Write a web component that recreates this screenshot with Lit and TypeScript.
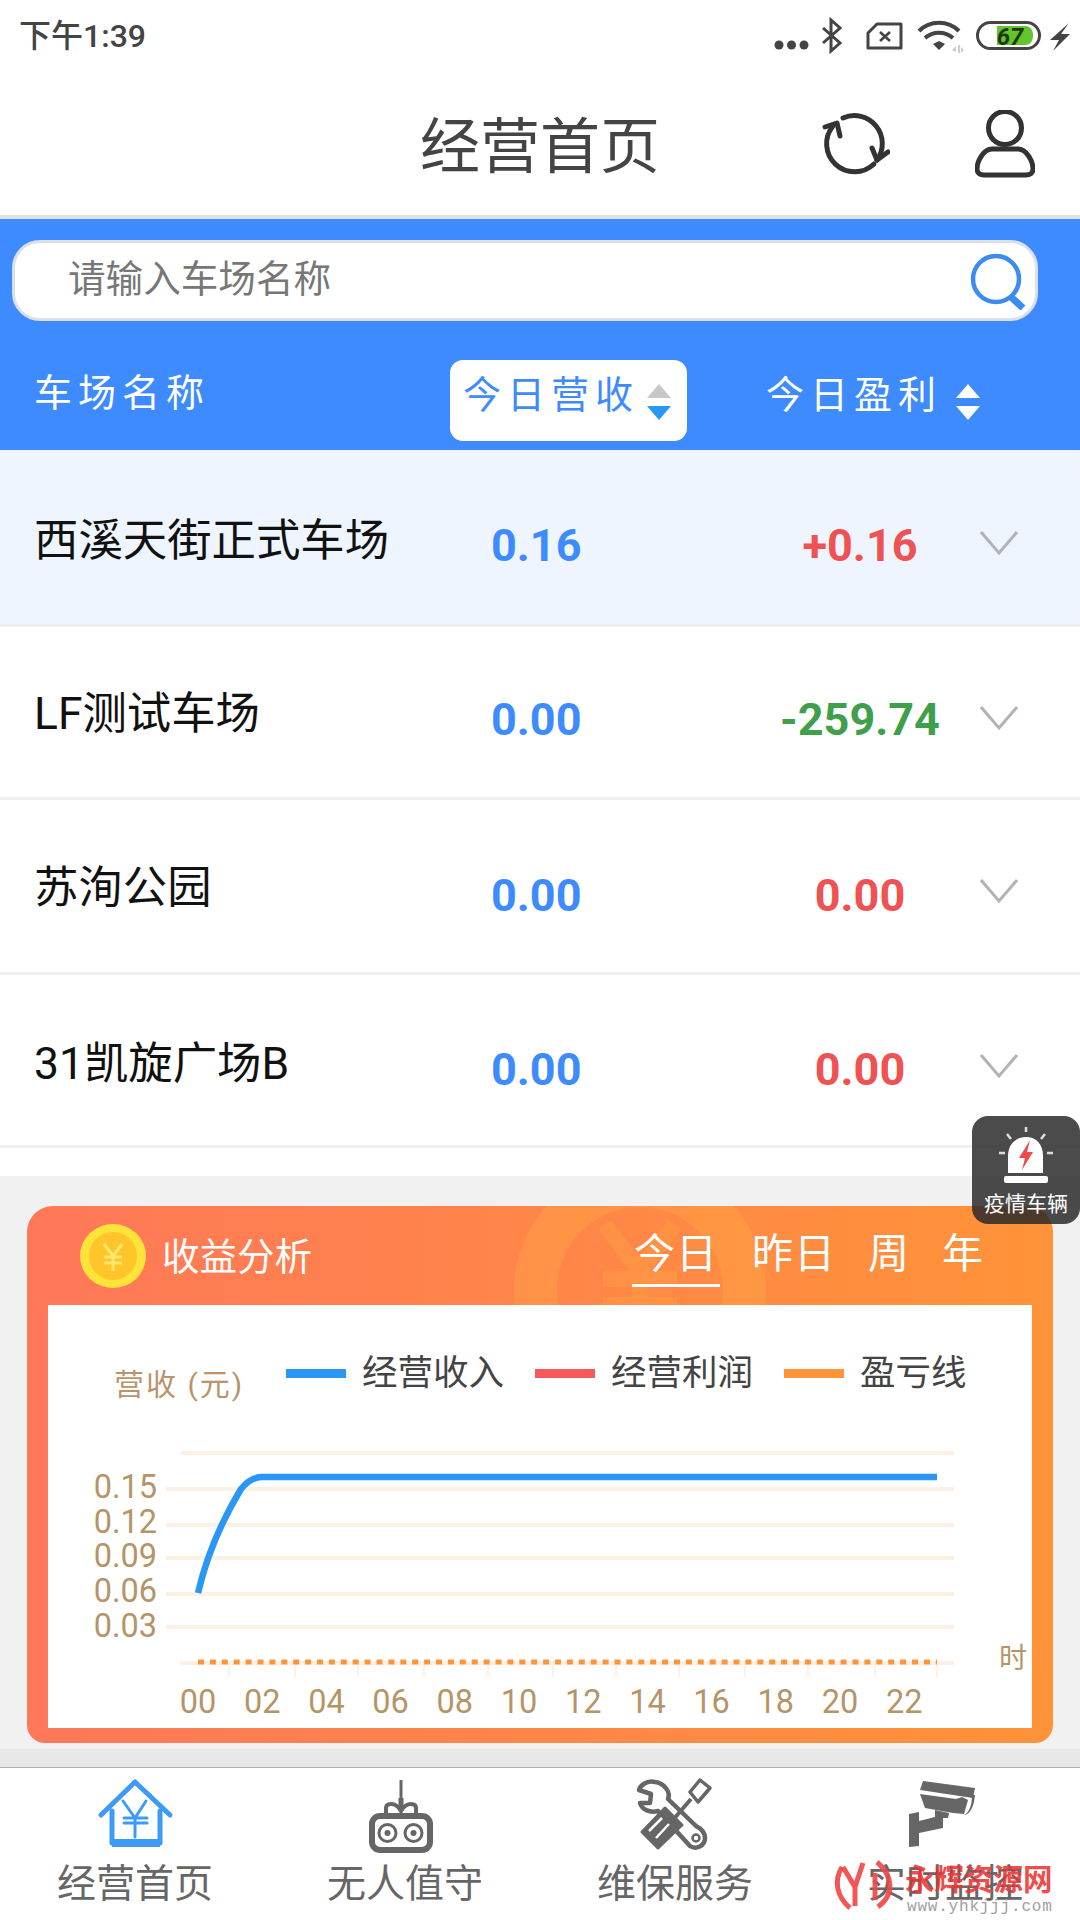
import { LitElement, html, css, svg } from "lit";
import { customElement } from "lit/decorators.js";

const rows = [
  { name: "西溪天街正式车场", rev: "0.16", profit: "+0.16", cls: "red", pos: "on" },
  { name: "LF测试车场", rev: "0.00", profit: "-259.74", cls: "green", pos: "r2" },
  { name: "苏洵公园", rev: "0.00", profit: "0.00", cls: "red", pos: "r3" },
  { name: "31凯旋广场B", rev: "0.00", profit: "0.00", cls: "red", pos: "r4" },
];

const sortArrows = (up: string, down: string) => html`<svg class="sort" width="24" height="36" viewBox="0 0 24 36">
  <path d="M12 0 24 14H0Z" fill=${up}/><path d="M0 22H24L12 36Z" fill=${down}/></svg>`;

const xLabels = ["00","02","04","06","08","10","12","14","16","18","20","22"];
const yLabels: [string, number][] = [["0.15",181],["0.12",216],["0.09",250],["0.06",285],["0.03",320]];
const ticks = [229,295,358,424,488,553,616,679,745,808,875,937];
const gridY = [184,220,253,289,322];

const chart = svg`
  <rect x="133" y="146" width="773" height="4" fill="#fdf0e4"/>
  ${gridY.map(y => svg`<rect x="118" y=${y - 2} width="788" height="4" fill="#fdf0e4"/>`)}
  <rect x="132" y="356" width="774" height="4" fill="#fdf0e4"/>
  ${ticks.map(x => svg`<rect x=${x - 48 - 1} y="358" width="2" height="14" fill="#fdf0e4"/>`)}
  <path d="M150 288C157 258 170 222 193 184Q203 172 214 172H889" fill="none" stroke="#2a97f5" stroke-width="6.5"/>
  <line x1="150" y1="357" x2="889" y2="357" stroke="#ff9538" stroke-width="5" stroke-dasharray="6 5.9"/>
  ${yLabels.map(([t, y]) => svg`<text class="ax" x="109" y=${y + 12} text-anchor="end">${t}</text>`)}
  ${xLabels.map((t, i) => svg`<text class="ax" x=${150 + i * 64.2} y="408" text-anchor="middle">${t}</text>`)}
  <text class="hr" x="965" y="363" text-anchor="middle">时</text>
`;

@customElement("app-root")
export class AppRoot extends LitElement {
  static styles = css`
    :host { display: block; position: relative; width: 1080px; height: 1920px; overflow: hidden; background: #f1f1f1;
      font-family: Roboto, "Noto Sans CJK SC", sans-serif; }
    .status { height: 72px; background: #fff; display: flex; justify-content: space-between; align-items: flex-start; }
    .time { font-size: 32px; font-weight: 500; color: #444; margin: 17px 0 0 19px; line-height: 38px; }
    .status svg { display: block; }
    .head { height: 143px; background: #fff; border-bottom: 4px solid #dfe1e3; display: grid;
      grid-template-columns: 822px 68px 85px 60px 45px; position: relative; }
    .title { position: absolute; left: 0; right: 0; top: 34px; text-align: center; font-size: 60px; line-height: 84px; color: #444; }
    .head svg { display: block; margin-top: 38px; }
    .refresh { grid-column: 2; }
    .user { grid-column: 4; }
    .blue { height: 231px; background: #3d8bff; padding: 21px 0 0 12px; box-sizing: border-box; }
    .search { width: 1026px; height: 81px; box-sizing: border-box; border: 3px solid #dcdfe4; border-radius: 28px; background: #fff;
      display: flex; align-items: center; justify-content: space-between; padding: 0 7px 0 53px; }
    .search span { font-size: 37.6px; color: #777; margin-top: -10px; }
    .cols { display: grid; grid-template-columns: 416px 237px 1fr; margin-top: 39px; margin-left: 22px; }
    .cols .c { font-size: 38px; letter-spacing: 6px; color: #fff; line-height: 50px; white-space: nowrap; }
    .c1 { margin-top: 8px; }
    .btn { height: 81px; box-sizing: border-box; background: #fff; border-radius: 13px; display: flex; padding: 10px 0 0 13px; gap: 8px; }
    .cols .btn .c { color: #3d8bff; }
    .c3 { display: flex; padding: 10px 0 0 79px; gap: 14px; }
    .sort { margin-top: 14px; flex: none; display: block; }
    .row { box-sizing: border-box; border-bottom: 3px solid #eff0f1; background: #fff; padding-left: 34px;
      display: grid; grid-template-columns: 457px 89px 160px 240px 1fr; --name: 58px; --val: 64px; --chev: 78px; height: 174px; }
    .row.on { background: #eef5ff; height: 177px; border-bottom-color: #eceef0; --name: 61px; --val: 66px; --chev: 80px; }
    .row.r2 { height: 173px; --name: 57px; --val: 63px; --chev: 78px; }
    .row.r3 { height: 175px; --name: 58px; --val: 66px; --chev: 78px; }
    .row.r4 { height: 173px; --name: 59px; --val: 65px; --chev: 78px; }
    .name { font-size: 44.4px; color: #111; line-height: 60px; margin-top: var(--name); white-space: nowrap; }
    .rev, .profit { font-size: 45px; font-weight: 700; line-height: 60px; margin-top: var(--val); }
    .rev { color: #3d8bff; grid-column: 2; }
    .profit { grid-column: 4; text-align: center; }
    .profit.red { color: #ee5252; }
    .profit.green { color: #3f9f4a; }
    .chev { margin: var(--chev) 0 0 0; display: block; grid-column: 5; }
    .gap { height: 28px; background: #fff; }
    .card { margin: 30px 27px 0; height: 537px; border-radius: 26px 26px 18px 18px; position: relative; overflow: hidden;
      background: linear-gradient(90deg, #ff7859, #ff9338); padding: 0 21px 15px; box-sizing: border-box; display: flex; flex-direction: column; }
    .deco { position: absolute; left: 487px; top: -42px; width: 166px; height: 166px; border-radius: 50%; border: 43px solid rgba(255,180,70,.3); }
    .yen { position: absolute; left: 560px; top: 15px; display: block; }
    .chead { height: 99px; display: flex; align-items: flex-start; position: relative; }
    .chead svg { display: block; margin: 18px 0 0 32px; }
    .ct { font-size: 37.5px; color: #fff; margin: 26px 0 0 16px; line-height: 50px; flex: 1; }
    .tabs { display: flex; gap: 32px; margin: 20px 48px 0 0; }
    .tab { font-size: 41px; color: #fff; line-height: 56px; letter-spacing: 1px; }
    .tab.on { border-bottom: 3px solid #fff; height: 56px; padding: 0 2px 2px 2px; }
    .panel { background: #fff; flex: 1; min-height: 0; display: flex; flex-direction: column; position: relative; }
    .legend { display: flex; align-items: center; height: 62px; margin-top: 37px; padding-left: 66px; flex: none; }
    .unit { font-size: 30px; letter-spacing: 2px; color: #b9946a; line-height: 40px; margin: 24px 0 0 0; width: 172px; white-space: nowrap; flex: none; }
    .lg { display: flex; align-items: center; margin-right: 31px; }
    .lg i { display: block; width: 60px; height: 9px; margin-right: 16px; }
    .lg span { font-size: 35.5px; color: #444; line-height: 46px; white-space: nowrap; }
    .plot { display: block; flex: none; }
    .ax { font: 32.5px Roboto, "Noto Sans CJK SC", sans-serif; fill: #b59468; }
    .hr { font: 28px Roboto, "Noto Sans CJK SC", sans-serif; fill: #b59468; }
    .footgap { margin-top: 6px; background: #e8e8e8; border-bottom: 1px solid #aab0b4; height: 18px; }
    .nav { height: 152px; background: #fff; display: grid; grid-template-columns: repeat(4, 270px); }
    .item { display: flex; flex-direction: column; align-items: center; height: 152px; }
    .iconbox { height: 84px; margin-top: 7px; flex: none; }
    .iconbox svg { display: block; }
    .label { font-size: 39px; line-height: 50px; color: #666; white-space: nowrap; }
    .float { position: absolute; left: 972px; top: 1116px; width: 108px; height: 108px; background: rgba(40,40,40,.84); border-radius: 16px;
      display: flex; flex-direction: column; align-items: center; }
    .float svg { margin-top: 10px; display: block; }
    .float span { font-size: 21px; color: #fff; line-height: 28px; margin-top: 4px; white-space: nowrap; }
    .wm { position: absolute; left: 830px; top: 1858px; width: 250px; height: 62px; }
    .wm b { position: absolute; left: 75px; top: 2px; font-size: 29.5px; font-weight: 700; line-height: 40px; color: rgba(240,50,50,.88); white-space: nowrap; }
    .wm em { position: absolute; left: 77px; top: 39px; font: normal 16px "Liberation Mono", monospace; color: #a0a0a0; letter-spacing: .8px; line-height: 20px; white-space: nowrap; }
    .wm svg { position: absolute; left: 3px; top: 0; }
  `;

  render() {
    return html`
      <div class="status">
        <div class="time">下午1:39</div>
        <svg width="320" height="72" viewBox="760 0 320 72">
          <g fill="#444"><circle cx="779" cy="45" r="4.5"/><circle cx="791.5" cy="45" r="4.5"/><circle cx="804" cy="45" r="4.5"/></g>
          <path d="M823 28 840 43 831 51V20L840 28 823 43" fill="none" stroke="#444" stroke-width="3"/>
          <path d="M868 33 877 24H901V48H868Z" fill="none" stroke="#444" stroke-width="3" stroke-linejoin="round"/>
          <path d="M880 32 890 41M890 32 880 41" stroke="#444" stroke-width="2.6"/>
          <path d="M919 31C930 20 948 20 959 31M925 38C933 31 945 31 953 38" fill="none" stroke="#444" stroke-width="4"/>
          <path d="M933 44 939 41 945 44 939 50Z" fill="#444"/>
          <path d="M952 50 956 46V52ZM958 45H960V53H958ZM961 47 964 50 961 53Z" fill="#ccc"/>
          <rect x="977.5" y="22.5" width="62" height="26" rx="13" fill="#fff" stroke="#444" stroke-width="3"/>
          <path d="M997 26H1025C1031 26 1033 31 1033 35.5 1033 40 1031 45 1025 45H997Z" fill="#62c42e"/>
          <text x="1010" y="45" text-anchor="middle" font-family="Roboto" font-weight="700" font-style="italic" font-size="24" fill="#1f3a10">67</text>
          <path d="M1069 23 1050 40 1059 40 1053 51 1070 34 1061 34Z" fill="#444"/>
        </svg>
      </div>
      <div class="head">
        <div class="title">经营首页</div>
        <svg class="refresh" width="68" height="68" viewBox="822 110 68 68" fill="none" stroke="#333" stroke-width="5" stroke-linecap="round" stroke-linejoin="round">
          <path d="M843 118A28 28 0 0 1 877 160"/>
          <path d="M872 148 877 160 888 152"/>
          <path d="M833 126A28 28 0 0 0 874 164"/>
          <path d="M825 127 837 123 840 136"/>
        </svg>
        <svg class="user" width="60" height="70" viewBox="975 110 60 70" fill="none" stroke="#333" stroke-width="5">
          <circle cx="1005" cy="128" r="16.5"/>
          <path d="M992 149H1018C1027 149 1033 162 1033 169 1033 173 1030 175 1026 175H984C980 175 977 173 977 169 977 162 983 149 992 149Z"/>
        </svg>
      </div>
      <div class="blue">
        <div class="search">
          <span>请输入车场名称</span>
          <svg width="58" height="58" viewBox="0 0 58 58" fill="none" stroke="#3b8bf0" stroke-width="4.5">
            <circle cx="26" cy="27" r="23"/><path d="M41 45 53 56" stroke-width="7"/>
          </svg>
        </div>
        <div class="cols">
          <div class="c c1">车场名称</div>
          <div class="btn"><div class="c">今日营收</div>${sortArrows("#c8c8c8", "#2a97f5")}</div>
          <div class="c3"><div class="c">今日盈利</div>${sortArrows("#fff", "#fff")}</div>
        </div>
      </div>
      ${rows.map(r => html`
        <div class="row ${r.pos}">
          <div class="name">${r.name}</div>
          <div class="rev">${r.rev}</div>
          <div class="profit ${r.cls}">${r.profit}</div>
          <svg class="chev" width="38" height="26" viewBox="0 0 38 26" fill="none" stroke="#b0b4b8" stroke-width="3">
            <path d="M1 2 19 23 37 2"/>
          </svg>
        </div>`)}
      <div class="gap"></div>
      <div class="card">
        <div class="deco"></div>
        <svg class="yen" width="106" height="100" viewBox="0 0 106 100" fill="none" stroke="rgba(255,180,70,.22)" stroke-width="16">
          <path d="M18 4 53 50 88 4M53 50V100M16 58H90M16 84H90"/>
        </svg>
        <div class="chead">
          <svg width="66" height="64" viewBox="0 0 66 64">
            <ellipse cx="33" cy="32" rx="33" ry="32" fill="#ffe23a"/>
            <ellipse cx="33" cy="32" rx="24" ry="24" fill="#ffc52a"/>
            <path d="M24 20 33 32 42 20M33 32V47M24 33H42M24 39H42" fill="none" stroke="#ffe86a" stroke-width="3"/>
          </svg>
          <div class="ct">收益分析</div>
          <div class="tabs">
            <div class="tab on">今日</div><div class="tab">昨日</div><div class="tab">周</div><div class="tab">年</div>
          </div>
        </div>
        <div class="panel">
          <div class="legend">
            <div class="unit">营收 (元)</div>
            <div class="lg"><i style="background:#2a97f5"></i><span>经营收入</span></div>
            <div class="lg"><i style="background:#f55a5a"></i><span>经营利润</span></div>
            <div class="lg"><i style="background:#ff9538"></i><span>盈亏线</span></div>
          </div>
          <svg class="plot" width="984" height="324" viewBox="0 99 984 324">${chart}</svg>
        </div>
      </div>
      <div class="footgap"></div>
      <div class="nav">
        <div class="item">
          <div class="iconbox"><svg width="80" height="80" viewBox="95 1775 80 80" fill="none" stroke="#3d9bf5" stroke-linecap="round" stroke-linejoin="round">
            <path d="M101 1815 135 1782 170 1815" stroke-width="5"/>
            <path d="M112 1811V1843H160V1811" stroke-width="5"/>
            <path d="M112 1843H160" stroke-width="8" stroke-linecap="butt"/>
            <path d="M123 1801 135 1818 146 1801M135 1818V1837M124 1818H147M124 1823H147" stroke-width="3"/>
          </svg></div>
          <div class="label">经营首页</div>
        </div>
        <div class="item">
          <div class="iconbox"><svg width="80" height="80" viewBox="365 1775 80 80" fill="none" stroke="#666">
            <path d="M401 1780V1800" stroke-width="3"/>
            <path d="M401 1798V1811" stroke-width="5"/>
            <path d="M386 1813V1808Q386 1804 391 1804 397 1804 401 1811 405 1804 411 1804 416 1804 416 1808V1813" stroke-width="4"/>
            <rect x="372" y="1816" width="58" height="34" rx="8" stroke-width="6"/>
            <circle cx="387.5" cy="1833" r="8.5" stroke-width="3"/><circle cx="387.5" cy="1833" r="3" fill="#666" stroke="none"/>
            <circle cx="413.5" cy="1833" r="8.5" stroke-width="3"/><circle cx="413.5" cy="1833" r="3" fill="#666" stroke="none"/>
          </svg></div>
          <div class="label">无人值守</div>
        </div>
        <div class="item">
          <div class="iconbox"><svg width="80" height="80" viewBox="635 1775 80 80" fill="none" stroke="#666" stroke-linejoin="round">
            <path d="M655 1782C646 1780 640 1786 639 1790L651 1794 650 1803 640 1803C642 1810 650 1813 658 1811L690 1846C696 1850 705 1846 705 1838 705 1832 700 1828 696 1826L668 1799C671 1792 664 1783 655 1782Z" fill="#fff" stroke-width="4.5"/>
            <circle cx="696" cy="1838" r="3.5" stroke-width="2.5"/>
            <path d="M665 1808 682 1825 658 1848 642 1832Z" fill="#666" stroke-width="3"/>
            <path d="M662 1818 649 1831M669 1824 656 1838" stroke="#fff" stroke-width="2.5"/>
            <path d="M672 1821 691 1799" stroke-width="4"/>
            <path d="M700 1780 710 1788 698 1802 690 1792Z" stroke-width="3.5"/>
          </svg></div>
          <div class="label">维保服务</div>
        </div>
        <div class="item">
          <div class="iconbox"><svg width="80" height="80" viewBox="905 1775 80 80" fill="#666">
            <path d="M923 1781 975 1788 973 1798 920 1790Z"/>
            <path d="M920 1794 956 1799 962 1797 968 1800 964 1814 953 1813 925 1808Z"/>
            <path d="M972 1795C972 1804 970 1812 964 1815 970 1815 974 1806 975 1795Z"/>
            <path d="M935 1810 949 1813 948 1818 943 1818 943 1828 919 1833V1846L909 1847V1814L919 1812V1821L935 1817Z"/>
          </svg></div>
          <div class="label">实时监控</div>
        </div>
      </div>
      <div class="float">
        <svg width="64" height="60" viewBox="0 0 64 60">
          <path d="M14 47V30C14 18 22 11 32 11 42 11 49 18 49 30V47Z" fill="#fff"/>
          <rect x="10" y="50" width="44" height="7" rx="2" fill="#fff"/>
          <path d="M36 14 25 32H31L28 44 39 26H33Z" fill="#ee4a4a"/>
          <path d="M32 1V6M13 8 17 13M51 8 47 13M5 27H11M53 27H59" stroke="#ddd" stroke-width="2.5"/>
        </svg>
        <span>疫情车辆</span>
      </div>
      <div class="wm">
        <svg width="70" height="60" viewBox="0 0 70 60" fill="none" stroke="#f04545" stroke-width="5" stroke-opacity=".9">
          <path d="M9 9C1 22 3 38 17 50"/><path d="M10 9 22 29 30 5M22 29V48M42 15V42"/><path d="M44 4C60 18 62 36 45 49"/>
        </svg>
        <b>永辉资源网</b>
        <em>www.yhkjjj.com</em>
      </div>
    `;
  }
}
